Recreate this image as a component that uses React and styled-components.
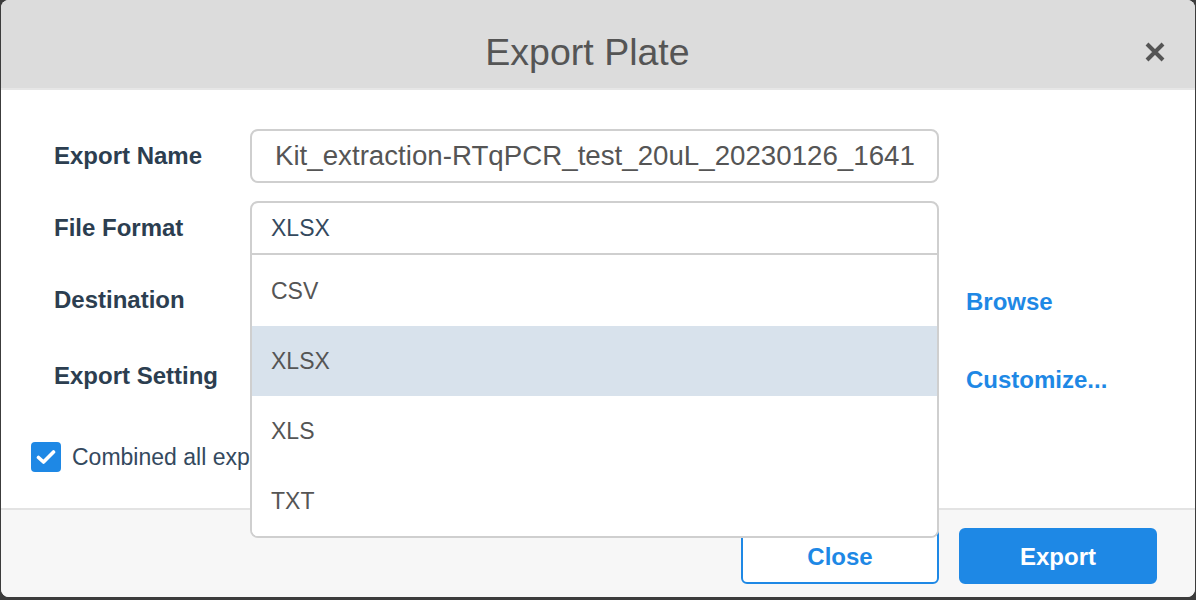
import React, { useState } from 'react';
import styled, { createGlobalStyle } from 'styled-components';

const GlobalStyle = createGlobalStyle`
  html, body {
    margin: 0;
    padding: 0;
    background: #3c3c3c;
    font-family: "Liberation Sans", Arial, sans-serif;
  }
`;

const Backdrop = styled.div`
  width: 1196px;
  height: 600px;
  background: #3c3c3c;
  overflow: hidden;
`;

const Modal = styled.div`
  position: relative;
  margin-left: 1px;
  width: 1194px;
  height: 597px;
  display: flex;
  flex-direction: column;
  background: #fff;
  border-radius: 8px;
  overflow: hidden;
`;

const Header = styled.div`
  height: 90px;
  flex: none;
  display: grid;
  grid-template-columns: 1fr auto 1fr;
  align-items: center;
  padding-top: 16px;
  box-sizing: border-box;
  background: #dcdcdc;
  border-bottom: 2px solid #e6e6e6;
`;

const Title = styled.h1`
  grid-column: 2;
  margin: 0 21px 0 0;
  font-size: 37.5px;
  font-weight: normal;
  color: #555;
`;

const CloseIcon = styled.button`
  justify-self: end;
  margin-right: 29px;
  width: 22px;
  height: 22px;
  padding: 0;
  border: none;
  background: none;
  cursor: pointer;
  display: flex;
`;

const Body = styled.div`
  flex: 1;
  padding: 39px 0 0 30px;
`;

const Form = styled.div`
  display: flex;
  flex-direction: column;
  gap: 18px;
  padding-left: 23px;
`;

const FieldRow = styled.div`
  display: grid;
  grid-template-columns: 196px 689px auto;
  align-items: center;
  height: 54px;
  margin-top: ${(p) => (p.$shift ? `${p.$shift}px` : '0')};
`;

const Label = styled.label`
  font-size: 24px;
  font-weight: bold;
  color: #2c3e50;
`;

const TextInput = styled.input`
  box-sizing: border-box;
  width: 100%;
  height: 54px;
  padding: 0 0 0 23px;
  border: 2px solid #cfcfcf;
  border-radius: 8px;
  font-family: inherit;
  font-size: 27.7px;
  color: #555;
  background: #fff;
  outline: none;
`;

const SelectWrap = styled.div`
  position: relative;
  height: 54px;
  z-index: 2;
`;

const SelectBox = styled.div`
  box-sizing: border-box;
  height: 54px;
  display: flex;
  align-items: center;
  padding-left: 19px;
  border: 2px solid #cfcfcf;
  border-radius: ${(p) => (p.$open ? '8px 8px 0 0' : '8px')};
  font-size: 23px;
  color: #34495e;
  background: #fff;
  cursor: pointer;
`;

const OptionList = styled.ul`
  position: absolute;
  top: 100%;
  left: 0;
  right: 0;
  margin: 0;
  padding: 1px 0 0;
  list-style: none;
  background: #fff;
  border: 2px solid #cfcfcf;
  border-top: none;
  border-radius: 0 0 8px 8px;
  overflow: hidden;
`;

const Option = styled.li`
  height: 70px;
  display: flex;
  align-items: center;
  padding-left: 19px;
  font-size: 23px;
  color: #555;
  background: ${(p) => (p.$active ? '#d8e2ec' : '#fff')};
  cursor: pointer;
`;

const LinkButton = styled.button`
  justify-self: start;
  margin-left: 27px;
  padding: 0;
  border: none;
  background: none;
  font-family: inherit;
  font-size: 24px;
  font-weight: bold;
  color: #1e88e5;
  cursor: pointer;
  padding-top: ${(p) => (p.$drop ? `${p.$drop}px` : '0')};
  white-space: nowrap;
`;

const CheckRow = styled.label`
  display: flex;
  align-items: center;
  gap: 11px;
  margin-top: 39px;
  font-size: 23px;
  color: #34495e;
  cursor: pointer;
`;

const CheckBox = styled.span`
  width: 30px;
  height: 30px;
  border-radius: 4px;
  background: #1e88e5;
  display: flex;
  align-items: center;
  justify-content: center;
  flex: none;
`;

const Footer = styled.div`
  height: 89px;
  flex: none;
  box-sizing: border-box;
  display: flex;
  justify-content: flex-end;
  gap: 20px;
  padding: 18px 38px 0 0;
  background: #f7f7f7;
  border-top: 2px solid #e3e3e3;
`;

const ActionButton = styled.button`
  box-sizing: border-box;
  width: 198px;
  height: 56px;
  padding-top: 2px;
  border-radius: 6px;
  border: 2px solid #1e88e5;
  background: ${(p) => (p.$primary ? '#1e88e5' : '#fff')};
  color: ${(p) => (p.$primary ? '#fff' : '#1e88e5')};
  font-family: inherit;
  font-size: 24px;
  font-weight: bold;
  cursor: pointer;
`;

const formats = ['CSV', 'XLSX', 'XLS', 'TXT'];

export default function App() {
  const [format, setFormat] = useState('XLSX');
  const [open, setOpen] = useState(true);
  const [combined, setCombined] = useState(true);

  return (
    <Backdrop>
      <GlobalStyle />
      <Modal>
        <Header>
          <Title>Export Plate</Title>
          <CloseIcon aria-label="Close">
            <svg width="22" height="22" viewBox="0 0 22 22">
              <path d="M3 3 L19 19 M19 3 L3 19" stroke="#555" strokeWidth="4" strokeLinecap="butt" />
            </svg>
          </CloseIcon>
        </Header>
        <Body>
          <Form>
            <FieldRow>
              <Label>Export Name</Label>
              <TextInput defaultValue="Kit_extraction-RTqPCR_test_20uL_20230126_1641" />
            </FieldRow>
            <FieldRow>
              <Label>File Format</Label>
              <SelectWrap>
                <SelectBox $open={open} onClick={() => setOpen(!open)}>
                  {format}
                </SelectBox>
                {open && (
                  <OptionList>
                    {formats.map((f) => (
                      <Option
                        key={f}
                        $active={f === format}
                        onClick={() => {
                          setFormat(f);
                          setOpen(false);
                        }}
                      >
                        {f}
                      </Option>
                    ))}
                  </OptionList>
                )}
              </SelectWrap>
            </FieldRow>
            <FieldRow>
              <Label>Destination</Label>
              <TextInput defaultValue="C:\Exports" />
              <LinkButton $drop={4}>Browse</LinkButton>
            </FieldRow>
            <FieldRow $shift={4}>
              <Label>Export Setting</Label>
              <TextInput defaultValue="Default" />
              <LinkButton $drop={8}>Customize...</LinkButton>
            </FieldRow>
          </Form>
          <CheckRow onClick={() => setCombined(!combined)}>
            <CheckBox>
              {combined && (
                <svg width="20" height="16" viewBox="0 0 20 16">
                  <path d="M2.5 8.5 L7.5 13 L17.5 3" fill="none" stroke="#fff" strokeWidth="3.6" strokeLinecap="round" strokeLinejoin="round" />
                </svg>
              )}
            </CheckBox>
            Combined all exported data into one file
          </CheckRow>
        </Body>
        <Footer>
          <ActionButton>Close</ActionButton>
          <ActionButton $primary>Export</ActionButton>
        </Footer>
      </Modal>
    </Backdrop>
  );
}
